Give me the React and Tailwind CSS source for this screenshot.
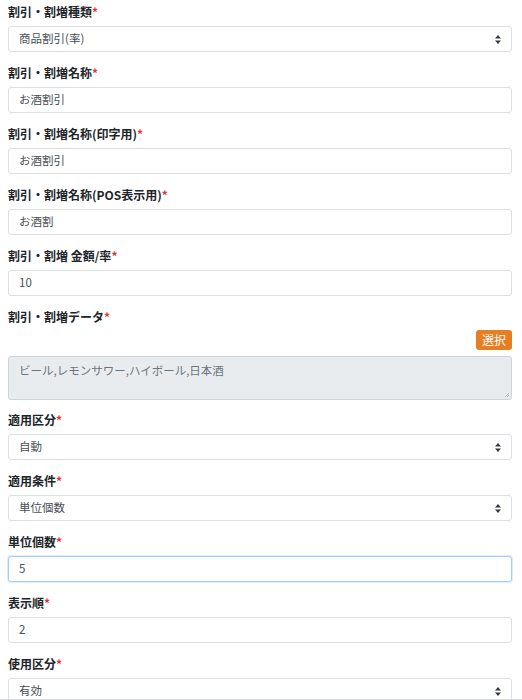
import React from "react";

const fields = [
  { label: "割引・割増種類", value: "商品割引(率)", type: "select" },
  { label: "割引・割増名称", value: "お酒割引", type: "input" },
  { label: "割引・割増名称(印字用)", value: "お酒割引", type: "input" },
  { label: "割引・割増名称(POS表示用)", value: "お酒割", type: "input" },
  { label: "割引・割増 金額/率", value: "10", type: "input" },
  { label: "割引・割増データ", value: "ビール,レモンサワー,ハイボール,日本酒", type: "data" },
  { label: "適用区分", value: "自動", type: "select" },
  { label: "適用条件", value: "単位個数", type: "select" },
  { label: "単位個数", value: "5", type: "focus" },
  { label: "表示順", value: "2", type: "input" },
  { label: "使用区分", value: "有効", type: "select" },
];

const SortArrows = () => (
  <svg width="6" height="9" viewBox="0 0 6 9" className="shrink-0">
    <path d="M3 0 L6 3.6 L0 3.6 Z" fill="#343a40" />
    <path d="M3 9 L6 5.4 L0 5.4 Z" fill="#343a40" />
  </svg>
);

const Field = ({ field }) => {
  const { label, value, type } = field;
  const isData = type === "data";

  return (
    <div className={isData ? "mb-[11px]" : "mb-[12px]"}>
      <div
        className={`h-[18px] text-[12px] leading-[18px] font-bold text-[#212529] ${
          isData ? "mb-[4px]" : "mb-[5px]"
        }`}
      >
        {label}
        <span className="text-[#e3342f]">*</span>
      </div>

      {isData ? (
        <>
          <div className="mb-[6px] flex justify-end">
            <button className="h-[20px] rounded-[3px] bg-[#e67e22] px-[6px] text-[12px] leading-[20px] text-white">
              選択
            </button>
          </div>
          <div className="relative h-[44px] rounded-[3px] border border-[#ced4da] bg-[#e9ecef] px-[10px] pt-[4px] text-[11.5px] leading-[18px] text-[#6c757d]">
            {value}
            <svg
              width="5"
              height="5"
              viewBox="0 0 5 5"
              className="absolute right-[2px] bottom-[2px]"
            >
              <path d="M5 1 L1 5 M5 3 L3 5" stroke="#9ca3af" strokeWidth="0.8" />
            </svg>
          </div>
        </>
      ) : (
        <div
          className={`flex h-[26px] items-center justify-between rounded-[3px] border bg-white pr-[10px] pl-[10px] text-[11.5px] text-[#495057] ${
            type === "focus"
              ? "border-[#9fcdff] shadow-[0_0_0_1px_rgba(128,189,255,0.25)]"
              : "border-[#dcdfe3]"
          }`}
        >
          <span>{value}</span>
          {type === "select" && <SortArrows />}
        </div>
      )}
    </div>
  );
};

export default function App() {
  return (
    <div
      className="h-[700px] w-[522px] overflow-hidden border-b border-[#d7dadd] bg-white"
      style={{ fontFamily: '"Noto Sans CJK JP", "Noto Sans", sans-serif' }}
    >
      <div className="pt-[3px] pr-[10px] pl-[8px]">
        {fields.map((field, index) => (
          <Field key={index} field={field} />
        ))}
      </div>
    </div>
  );
}
